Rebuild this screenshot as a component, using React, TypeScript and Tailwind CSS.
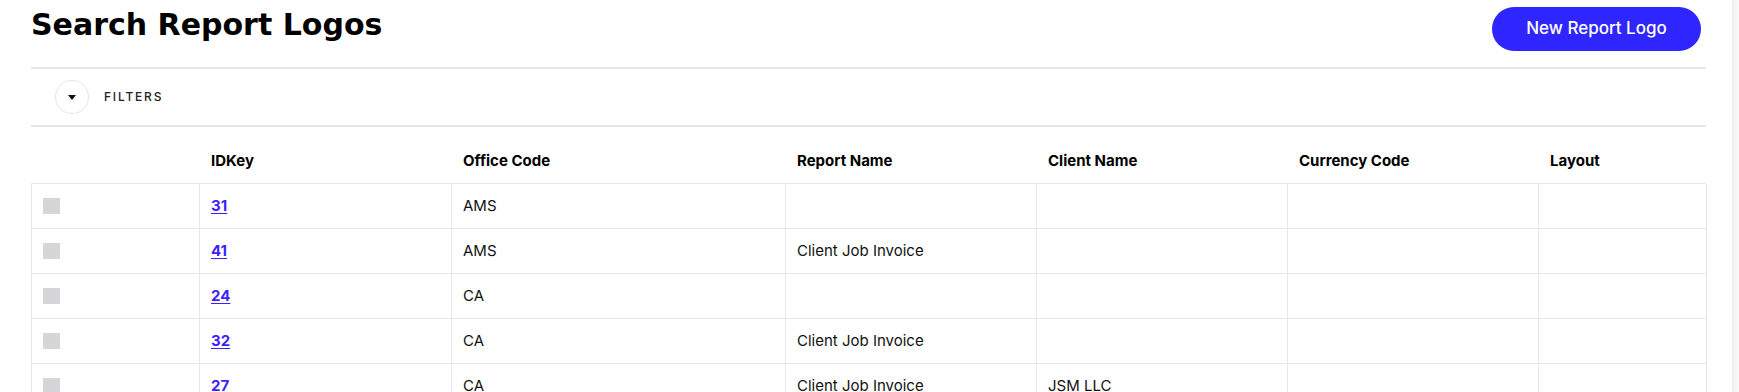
import React from "react";

type Row = {
  id: string;
  office: string;
  report: string;
  client: string;
  currency: string;
  layout: string;
};

const rows: Row[] = [
  { id: "31", office: "AMS", report: "", client: "", currency: "", layout: "" },
  { id: "41", office: "AMS", report: "Client Job Invoice", client: "", currency: "", layout: "" },
  { id: "24", office: "CA", report: "", client: "", currency: "", layout: "" },
  { id: "32", office: "CA", report: "Client Job Invoice", client: "", currency: "", layout: "" },
  { id: "27", office: "CA", report: "Client Job Invoice", client: "JSM LLC", currency: "", layout: "" },
];

const cols = "grid grid-cols-[168px_252px_334px_251px_251px_251px_168px]";

function Cell({ children }: { children?: React.ReactNode }) {
  return (
    <div className="flex h-[45px] items-center border-r border-b border-[#e5e7eb] px-[11px] text-[15px] text-[#111]">
      {children}
    </div>
  );
}

export default function App() {
  return (
    <div className="flex h-screen overflow-hidden bg-white font-['Inter',sans-serif] text-black">
      <div className="min-w-0 flex-1 pl-[31px] pr-[26px]">
        <div className="flex h-[67px] items-start justify-between">
          <h1 className="mt-[10px] font-['DejaVu_Sans',sans-serif] text-[30px] font-bold leading-[30px] text-black">
            Search Report Logos
          </h1>
          <button className="mt-[7px] mr-[5px] h-[44px] w-[209px] rounded-full bg-[#2f26ff] text-[17px] font-medium text-white">
            New Report Logo
          </button>
        </div>
        <div className="flex h-[60px] items-center gap-[15px] border-t-2 border-b-2 border-[#e4e7eb] pl-[24px]">
          <div className="flex h-[34px] w-[34px] items-center justify-center rounded-full border border-[#e3e5e8]">
            <svg width="8" height="5" viewBox="0 0 8 5">
              <path d="M0 0 L8 0 L4 5 Z" fill="#111" />
            </svg>
          </div>
          <span className="text-[12px] font-medium tracking-[0.15em] text-[#222]">FILTERS</span>
        </div>
        <div className={`${cols} h-[56px] items-end pb-[12px] pl-px text-[15px] font-bold leading-[20px]`}>
          <div />
          <div className="px-[11px]">IDKey</div>
          <div className="px-[11px]">Office Code</div>
          <div className="px-[11px]">Report Name</div>
          <div className="px-[11px]">Client Name</div>
          <div className="px-[11px]">Currency Code</div>
          <div className="px-[11px]">Layout</div>
        </div>
        <div className="border-t border-l border-[#e5e7eb]">
          {rows.map((r) => (
            <div key={r.id} className={cols}>
              <Cell>
                <div className="h-[16px] w-[17px] bg-[#d6d6d8]" />
              </Cell>
              <Cell>
                <a href="#" className="font-bold text-[#3b1fff] underline underline-offset-2">
                  {r.id}
                </a>
              </Cell>
              <Cell>{r.office}</Cell>
              <Cell>{r.report}</Cell>
              <Cell>{r.client}</Cell>
              <Cell>{r.currency}</Cell>
              <Cell>{r.layout}</Cell>
            </div>
          ))}
        </div>
      </div>
      <div className="w-[7px] shrink-0 bg-linear-to-r from-[#efefef] to-[#fafafa]" />
    </div>
  );
}
